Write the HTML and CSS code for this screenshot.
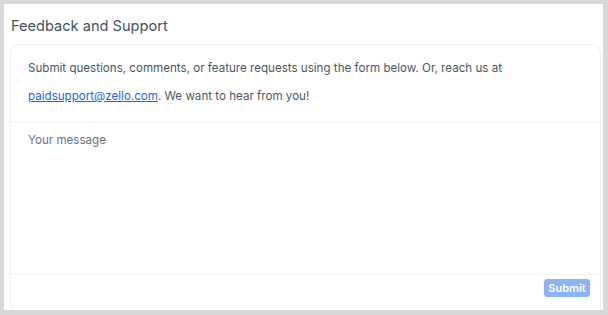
FILE: index.html
```html
<!DOCTYPE html>
<html lang="en">
<head>
    <meta charset="UTF-8">
    <meta name="viewport" content="width=device-width, initial-scale=1.0">
    <title>Feedback and Support</title>
    <link rel="stylesheet" href="styles.css">
</head>
<body>
    <div class="frame">
        <div class="panel">
            <h2 class="panel-title">Feedback and Support</h2>
            <form class="card" name="feedbackForm">
                <div class="card-intro">
                    Submit questions, comments, or feature requests using the form below. Or, reach us at
                    <br><a href="mailto:paidsupport@zello.com">paidsupport@zello.com</a>. We want to hear from you!
                </div>
                <textarea class="message" placeholder="Your message"></textarea>
                <div class="card-footer">
                    <button type="submit" class="btn-submit" disabled>Submit</button>
                </div>
            </form>
        </div>
    </div>
</body>
</html>
```

FILE: styles.css
```css
html, body{
    margin: 0;
    height: 100%;
}
body{
    background-color: #d8d8d8;
    font-family: Inter, "Noto Sans", sans-serif;
}
.frame{
    padding: 4px 5px 5px 4px;
    height: 100%;
    box-sizing: border-box;
}
.panel{
    background-color: #ffffff;
    height: 100%;
    overflow: hidden;
    padding: 0 2px 0 6px;
    box-sizing: border-box;
}
.panel-title{
    margin: 0;
    padding: 13px 0 0 1px;
    height: 40px;
    box-sizing: border-box;
    font-size: 14.6px;
    font-weight: 400;
    color: #3f525f;
}
.card{
    display: flex;
    flex-direction: column;
    border: 1px solid #eef0f2;
    border-radius: 9px;
    height: 300px;
}
.card-intro{
    padding: 9px 17px 12px 17px;
    font-size: 11.6px;
    line-height: 28px;
    color: #4a5864;
    border-bottom: 1px solid #eef0f2;
}
.card-intro a{
    color: #1a66e8;
}
.message{
    height: 152px;
    box-sizing: border-box;
    border: none;
    border-bottom: 1px solid #eef0f2;
    padding: 10px 17px;
    resize: none;
    font-family: inherit;
    font-size: 11.6px;
    outline: none;
}
.message::placeholder{
    color: #66747f;
}
.card-footer{
    display: flex;
    justify-content: flex-end;
    padding: 4px 10px;
}
.btn-submit{
    width: 46px;
    height: 18px;
    padding: 0;
    border: 1px solid #8ab3f8;
    border-radius: 3px;
    background-color: #8ab3f8;
    color: #ffffff;
    font-family: inherit;
    font-size: 11px;
    font-weight: 600;
}
```
